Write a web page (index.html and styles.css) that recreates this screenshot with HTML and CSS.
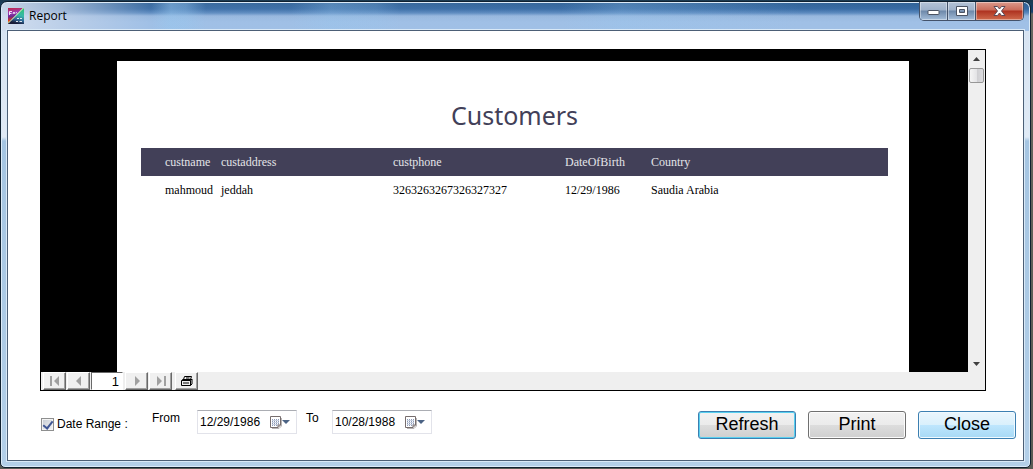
FILE: index.html
```html
<!DOCTYPE html>
<html lang="en">
<head>
<meta charset="utf-8">
<title>Report</title>
<link rel="stylesheet" href="styles.css">
</head>
<body>
<div class="window">
  <header class="titlebar">
    <svg class="app-icon" viewBox="0 0 16 16" aria-hidden="true">
      <defs>
        <linearGradient id="warm" gradientUnits="userSpaceOnUse" x1="2" y1="0" x2="4" y2="14"><stop offset="0" stop-color="#c02848"/><stop offset="0.35" stop-color="#9c3cb8"/><stop offset="0.6" stop-color="#6c2890"/><stop offset="0.85" stop-color="#d83020"/><stop offset="1" stop-color="#e8c020"/></linearGradient>
        <linearGradient id="cool" gradientUnits="userSpaceOnUse" x1="15" y1="1" x2="11" y2="16"><stop offset="0" stop-color="#30c078"/><stop offset="0.45" stop-color="#38b8a8"/><stop offset="0.75" stop-color="#306898"/><stop offset="1" stop-color="#181c38"/></linearGradient>
      </defs>
      <path d="M0 0H15L0 15Z" fill="url(#warm)"/>
      <path d="M16 0V16H0V15L15 0Z" fill="url(#cool)"/>
      <path d="M15.500 0L0 15.500" stroke="#e8ecb0" stroke-width="1"/>
      <path d="M1.500 7V3.500H4M1.500 5.500H3.500M5 6L6 4L7 6M8 4L9 5.500M9 10.500H11M12 10.500H14M8 13.500H10M11.500 13.500H14" stroke="#fff" fill="none" stroke-width="1" opacity="0.85"/>
    </svg>
    <h1 class="window-title">Report</h1>
    <div class="window-controls">
      <button class="control" type="button" aria-label="Minimize"><svg width="13" height="12" viewBox="0 0 13 12"><rect x="1" y="5.500" width="11" height="4" rx="0.500" fill="#fff" stroke="#4b5363"/></svg></button>
      <button class="control" type="button" aria-label="Maximize"><svg width="12" height="12" viewBox="0 0 12 12"><path fill-rule="evenodd" d="M0.500 1.500H11.500V10.500H0.500ZM3.500 4.500V7.500H8.500V4.500Z" fill="#fff" stroke="#4b5363"/></svg></button>
      <button class="control control-close" type="button" aria-label="Close window"><svg width="13" height="12" viewBox="0 0 13 12"><path d="M1 1.500H4.500L6.500 4L8.500 1.500H12L8.500 6L12 10.500H8.500L6.500 8L4.500 10.500H1L4.500 6Z" fill="#fff" stroke="#5a4a58"/></svg></button>
    </div>
  </header>

  <main class="client">
    <section class="viewer" aria-label="Report preview">
      <div class="viewport">
        <div class="canvas">
          <article class="sheet">
            <h2 class="report-title">Customers</h2>
            <table class="report">
              <colgroup><col class="col-name"><col class="col-wide"><col class="col-wide"><col class="col-date"><col></colgroup>
              <thead>
                <tr><th>custname</th><th>custaddress</th><th>custphone</th><th>DateOfBirth</th><th>Country</th></tr>
              </thead>
              <tbody>
                <tr><td>mahmoud</td><td>jeddah</td><td>3263263267326327327</td><td>12/29/1986</td><td>Saudia Arabia</td></tr>
              </tbody>
            </table>
          </article>
        </div>
        <div class="scrollbar">
          <button class="scroll-arrow" type="button" aria-label="Scroll up"><svg width="7" height="4" viewBox="0 0 7 4"><path d="M0 4L3.500 0L7 4Z" fill="#404040"/></svg></button>
          <div class="scroll-thumb"></div>
          <button class="scroll-arrow scroll-down" type="button" aria-label="Scroll down"><svg width="7" height="4" viewBox="0 0 7 4"><path d="M0 0H7L3.500 4Z" fill="#404040"/></svg></button>
        </div>
      </div>
      <nav class="pager" aria-label="Pages">
        <button class="page-button" type="button" aria-label="First page"><svg width="10" height="10" viewBox="0 0 10 10"><path d="M0 0H2V10H0ZM9 0V10L4 5Z" fill="#a0a0a0"/></svg></button>
        <button class="page-button" type="button" aria-label="Previous page"><svg width="10" height="10" viewBox="0 0 10 10"><path d="M7 0V10L2 5Z" fill="#a0a0a0"/></svg></button>
        <input class="page-number" type="text" value="1" aria-label="Page number">
        <button class="page-button" type="button" aria-label="Next page"><svg width="10" height="10" viewBox="0 0 10 10"><path d="M3 0V10L8 5Z" fill="#a0a0a0"/></svg></button>
        <button class="page-button" type="button" aria-label="Last page"><svg width="10" height="10" viewBox="0 0 10 10"><path d="M1 0V10L6 5ZM8 0H10V10H8Z" fill="#a0a0a0"/></svg></button>
        <button class="page-button print-button" type="button" aria-label="Print report"><svg width="12" height="12" viewBox="0 0 12 12"><path d="M2.500 4.500L3.500 1.500H10.500L9.500 4.500M5 3H8.500M0.500 5.500H9.500V10.500H0.500ZM9.500 5.500L11 4V9L9.500 10.500M1 5L2 4.500H10.500M2 8H8" fill="none" stroke="#000"/></svg></button>
      </nav>
    </section>

    <form class="controls">
      <label class="range-toggle"><input class="tick" type="checkbox" checked>Date Range :</label>
      <label class="date-label from-label" for="from">From</label>
      <div class="date-box">
        <input class="date-input" id="from" type="text" value="12/29/1986">
        <button class="date-button" type="button" aria-label="Choose start date"><svg width="20" height="13" viewBox="0 0 20 13"><path d="M2 12.500H9L11.500 10V2" fill="none" stroke="#b8b4b4"/><path d="M0.500 0.500H10.500V9L8 11.500H0.500Z" fill="#fff" stroke="#766d6d"/><path d="M2 3.500H9M2 5.500H9M2 7.500H9M2 9.500H7" stroke="#8e9bb8" stroke-dasharray="1 1"/><path d="M2 4.500H9M2 6.500H9M2 8.500H9" stroke="#c8d0df"/><path d="M8 11.500V9H10.500" fill="none" stroke="#766d6d"/><path d="M12 4H20L16 8Z" fill="#4b6384"/></svg></button>
      </div>
      <label class="date-label to-label" for="to">To</label>
      <div class="date-box">
        <input class="date-input" id="to" type="text" value="10/28/1988">
        <button class="date-button" type="button" aria-label="Choose end date"><svg width="20" height="13" viewBox="0 0 20 13"><path d="M2 12.500H9L11.500 10V2" fill="none" stroke="#b8b4b4"/><path d="M0.500 0.500H10.500V9L8 11.500H0.500Z" fill="#fff" stroke="#766d6d"/><path d="M2 3.500H9M2 5.500H9M2 7.500H9M2 9.500H7" stroke="#8e9bb8" stroke-dasharray="1 1"/><path d="M2 4.500H9M2 6.500H9M2 8.500H9" stroke="#c8d0df"/><path d="M8 11.500V9H10.500" fill="none" stroke="#766d6d"/><path d="M12 4H20L16 8Z" fill="#4b6384"/></svg></button>
      </div>
      <div class="actions">
        <button class="action action-default" type="button">Refresh</button>
        <button class="action" type="button">Print</button>
        <button class="action action-hot" type="button">Close</button>
      </div>
    </form>
  </main>
</div>
</body>
</html>
```

FILE: styles.css
```css
* {
  box-sizing: border-box;
}

body {
  margin: 0;
  height: 100vh;
  padding: 1px 2px 1px 0;
  overflow: hidden;
  background: linear-gradient(#1c3a50 0, #16406e 12px, #66665f 14px, #5a5a54 100%);
  font-family: "Liberation Sans", Arial, sans-serif;
}

button {
  margin: 0;
  padding: 0;
  font-family: inherit;
}

svg {
  display: block;
}

.window {
  height: 100%;
  display: flex;
  flex-direction: column;
  padding: 0 6px 6px;
  border: 1px solid #10202f;
  border-radius: 7px 7px 5px 5px;
  box-shadow: inset 0 0 0 1px #dcebf8;
  background:
    linear-gradient(90deg, rgba(216, 226, 240, 0.9) 0, rgba(200, 214, 234, 0.7) 60px, rgba(160, 190, 228, 0.1) 150px, rgba(160, 190, 228, 0) 100%) 0 0 / 100% 29px no-repeat,
    linear-gradient(90deg, rgba(150, 200, 240, 0) 150px, rgba(150, 200, 240, 0.5) 170px, rgba(150, 200, 240, 0.4) 185px, rgba(150, 200, 240, 0) 205px, rgba(150, 200, 240, 0) 290px, rgba(150, 200, 240, 0.3) 330px, rgba(150, 200, 240, 0.2) 375px, rgba(150, 200, 240, 0) 400px, rgba(150, 200, 240, 0) 560px, rgba(150, 200, 240, 0.25) 620px, rgba(150, 200, 240, 0) 800px) 0 0 / 100% 29px no-repeat,
    linear-gradient(#2f6195 0, #376aa3 7px, #5c8abf 11px, #98b8de 14px, #a0c0e6 20px, #a0c0e6 29px, rgba(162, 193, 233, 0) 29px),
    linear-gradient(#d4e1f0 0, #e0eaf5 135px, #a5c5e2 139px, #b3cfe8 100%);
}

.titlebar {
  flex: none;
  height: 28px;
  display: flex;
  align-items: flex-start;
}

.app-icon {
  width: 16px;
  height: 16px;
  margin: 6px 0 0 1px;
}

.window-title {
  margin: 5px 0 0 5px;
  font: 400 12px/18px "Open Sans", sans-serif;
  color: #000;
}

.window-controls {
  display: flex;
  margin: 0 0 0 auto;
  border: 1px solid #43526a;
  border-top: 0;
  border-radius: 0 0 5px 5px;
  overflow: hidden;
}

.control {
  width: 28px;
  height: 18px;
  display: flex;
  align-items: center;
  justify-content: center;
  border: 0;
  border-right: 1px solid #43526a;
  background: linear-gradient(#b4c3d6 0, #9fb2ca 8px, #6d88a9 9px, #a4bdd9 100%);
  box-shadow: inset 0 0 0 1px rgba(255, 255, 255, 0.4);
}

.control-close {
  width: 47px;
  border-right: 0;
  background: linear-gradient(#dc9a8c 0, #ca6c5a 8px, #ae3220 9px, #cf6b4d 100%);
}

.client {
  flex: 1;
  min-height: 0;
  display: flex;
  flex-direction: column;
  padding: 18px 7px 20px 32px;
  border: 1px solid #4c5f76;
  outline: 1px solid #d9e9f7;
  background: #fff;
}

.viewer {
  flex: 1;
  min-height: 0;
  display: flex;
  flex-direction: column;
  margin-right: 30px;
  border: 1px solid #000;
  background: #efefef;
}

.viewport {
  flex: 1;
  min-height: 0;
  display: flex;
}

.canvas {
  flex: 1;
  display: flex;
  padding: 11px 59px 0 76px;
  background: #000;
}

.sheet {
  flex: 1;
  padding: 34px 21px 0 24px;
  background: #fff;
}

.report-title {
  margin: 0 0 13px;
  font: 400 25px/40px "Noto Sans", Tahoma, sans-serif;
  text-align: center;
  color: #424058;
}

.report {
  width: 100%;
  table-layout: fixed;
  border-collapse: collapse;
  font: 12px/28px "Liberation Serif", "Times New Roman", serif;
  color: #000;
}

.report th,
.report td {
  height: 28px;
  padding: 0;
  font-weight: 400;
  text-align: left;
  white-space: nowrap;
}

.report th {
  background: #424058;
  color: #e4e4e8;
}

.report th:first-child,
.report td:first-child {
  padding-left: 24px;
}

.col-name {
  width: 80px;
}

.col-wide {
  width: 172px;
}

.col-date {
  width: 86px;
}

.scrollbar {
  flex: none;
  width: 17px;
  display: flex;
  flex-direction: column;
  align-items: center;
  background: #efefef;
}

.scroll-arrow {
  width: 17px;
  height: 17px;
  display: flex;
  align-items: center;
  justify-content: center;
  border: 0;
  background: none;
}

.scroll-down {
  margin-top: auto;
}

.scroll-thumb {
  width: 15px;
  height: 15px;
  margin-top: 1px;
  border: 1px solid #979797;
  border-radius: 2px;
  background: linear-gradient(90deg, #f5f5f5, #e4e4e6 50%, #cfcfd2 55%, #dcdcdf);
}

.pager {
  flex: none;
  height: 18px;
  display: flex;
  padding-left: 2px;
}

.page-button {
  width: 23px;
  height: 18px;
  margin-right: 1px;
  display: flex;
  align-items: center;
  justify-content: center;
  border: 1px solid;
  border-color: #fff #696969 #696969 #fff;
  background: #f0f0f0;
  box-shadow: inset -1px -1px #a0a0a0;
}

.page-number {
  width: 32px;
  height: 18px;
  margin: 0 2px 0 0;
  padding: 0 3px 0 0;
  border: 1px solid;
  border-color: #696969 #fff #fff #696969;
  background: #fff;
  font: 13px/16px "Liberation Sans", Arial, sans-serif;
  text-align: right;
}

.print-button {
  margin-left: 2px;
}

.controls {
  flex: none;
  display: flex;
  align-items: flex-start;
  height: 30px;
  margin-top: 19px;
  font-size: 12px;
  line-height: 16px;
}

.range-toggle {
  display: flex;
  align-items: center;
  gap: 3px;
  width: 112px;
  margin-top: 6px;
  padding-left: 1px;
}

.tick {
  appearance: none;
  width: 13px;
  height: 13px;
  margin: 0;
  border: 1px solid #8e8f8f;
  box-shadow: inset 0 0 0 1px #f4f4f4;
  background: linear-gradient(135deg, #c5cbd2, #f4f4f6);
  display: grid;
  place-items: center;
}

.tick:checked::before {
  content: "";
  width: 4px;
  height: 8px;
  border: solid #3f5694;
  border-width: 0 2px 2px 0;
  transform: rotate(38deg);
}

.date-label {
  display: block;
}

.from-label {
  width: 45px;
}

.to-label {
  width: 35px;
  padding-left: 9px;
}

.date-box {
  width: 100px;
  height: 24px;
  display: flex;
  align-items: center;
  border: 1px solid #e2e3ea;
  border-top-color: #abadb3;
}

.date-input {
  width: 72px;
  padding: 0 0 0 2px;
  border: 0;
  background: none;
  font: 12px/16px "Liberation Sans", Arial, sans-serif;
  color: #000;
}

.date-button {
  border: 0;
  background: none;
}

.actions {
  display: flex;
  gap: 12px;
  margin: 1px 0 0 auto;
}

.action {
  width: 98px;
  height: 28px;
  padding-bottom: 2px;
  border: 1px solid #707070;
  border-radius: 3px;
  box-shadow: inset 0 0 0 1px #fcfcfc;
  background: linear-gradient(#f2f2f2 0, #ebebeb 50%, #dddddd 50%, #cfcfcf 100%);
  font-size: 18px;
  line-height: 24px;
  color: #000;
}

.action-default {
  border-color: #3c7fb1;
  box-shadow: inset 0 0 0 1px #58d0f0;
}

.action-hot {
  border-color: #3c7fb1;
  box-shadow: inset 0 0 0 1px #f0faff;
  background: linear-gradient(#eaf6fd 0, #d9f0fc 50%, #bee6fd 50%, #a7d9f5 100%);
}
```
